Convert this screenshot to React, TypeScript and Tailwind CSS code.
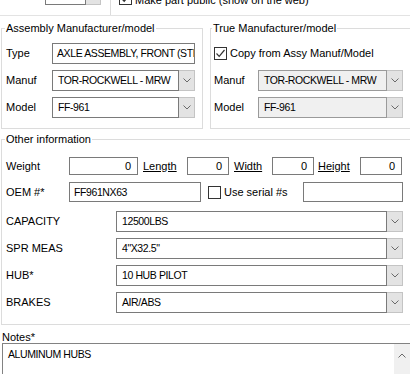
import React from "react";

// caps values in the original font are narrower than Arial
const valueText = "text-[10.5px] tracking-[-0.4px]";

function Chevron({ up = false }: { up?: boolean }) {
  return (
    <svg width="8" height="5" viewBox="0 0 8 5" className={up ? "rotate-180" : ""}>
      <path d="M0.5 0.5 L4 4 L7.5 0.5" fill="none" stroke="#6a6a6a" strokeWidth="1" />
    </svg>
  );
}

function Check({ checked = false }: { checked?: boolean }) {
  return (
    <div className="w-[13px] h-[13px] border border-[#333333] bg-white flex items-center justify-center shrink-0">
      {checked && (
        <svg width="11" height="11" viewBox="0 0 11 11">
          <path d="M1.5 5.5 L4.2 8.3 L9.5 2" fill="none" stroke="#333333" strokeWidth="1.2" />
        </svg>
      )}
    </div>
  );
}

function TextBox({ value = "", w, h = "h-[21px]", right = false }: { value?: string; w: string; h?: string; right?: boolean }) {
  return (
    <div
      className={`${w} ${h} border border-[#7a7a7a] bg-white flex items-center overflow-hidden whitespace-nowrap shrink-0 ${
        right ? "justify-end pr-[6px]" : `pl-[4px] ${valueText}`
      }`}
    >
      {value}
    </div>
  );
}

function Combo({ value, w, disabled = false }: { value: string; w: string; disabled?: boolean }) {
  return (
    <div className={`${w} h-[21px] flex shrink-0`}>
      <div
        className={`flex-1 h-full border flex items-center pl-[5px] overflow-hidden whitespace-nowrap ${valueText} ${
          disabled ? "bg-[#f0f0f0] border-[#9a9a9a]" : "bg-white border-[#7a7a7a]"
        }`}
      >
        {value}
      </div>
      <div className="w-[16px] h-full bg-[#e3e3e3] border border-l-0 border-[#c4c4c4] flex items-center justify-center">
        <Chevron />
      </div>
    </div>
  );
}

function Row({ label, labelW, children, className = "" }: { label: string; labelW: string; children: React.ReactNode; className?: string }) {
  return (
    <div className={`flex items-center ${className}`}>
      <div className={`${labelW} shrink-0`}>{label}</div>
      {children}
    </div>
  );
}

export default function App() {
  return (
    <div className="w-[410px] h-[374px] overflow-hidden bg-white text-black text-[11px] leading-[13px] font-['Liberation_Sans',Arial,sans-serif]">
      {/* top strip, cut off by the window */}
      <div className="h-[16px] border-b border-[#e3e3e3] flex items-start">
        <div className="ml-[45px] -mt-[16px] w-[56px] h-[21px] flex">
          <div className="flex-1 border border-[#7a7a7a] bg-white" />
          <div className="w-[15px] bg-[#e3e3e3] border border-l-0 border-[#c4c4c4]" />
        </div>
        <div className="ml-[9px] w-px h-[15px] bg-[#dcdcdc]" />
        <div className="ml-[8px] -mt-[8px]">
          <Check checked />
        </div>
        <div className="ml-[3px] -mt-[6px] whitespace-nowrap">Make part public (show on the web)</div>
      </div>

      {/* manufacturer group boxes */}
      <div className="flex">
        <div className="mt-[12px] ml-[1px] w-[202px] h-[101px] border border-[#dcdcdc] shrink-0">
          <div className="-mt-[7px] ml-[3px] px-[1px] bg-white w-fit">Assembly Manufacturer/model</div>
          <div className="pl-[4px]">
            <Row label="Type" labelW="w-[46px]" className="mt-[8px]">
              <TextBox value="AXLE ASSEMBLY, FRONT (STEER)" w="w-[143px]" />
            </Row>
            <Row label="Manuf" labelW="w-[46px]" className="mt-[6px]">
              <Combo value="TOR-ROCKWELL - MRW" w="w-[143px]" />
            </Row>
            <Row label="Model" labelW="w-[46px]" className="mt-[6px]">
              <Combo value="FF-961" w="w-[143px]" />
            </Row>
          </div>
        </div>
        <div className="mt-[12px] ml-[7px] w-[202px] h-[101px] border border-[#dcdcdc] shrink-0">
          <div className="-mt-[7px] ml-[1px] px-[1px] bg-white w-fit">True Manufacturer/model</div>
          <div className="pl-[3px]">
            <div className="mt-[12px] flex items-center">
              <Check checked />
              <div className="ml-[3px] whitespace-nowrap">Copy from Assy Manuf/Model</div>
            </div>
            <Row label="Manuf" labelW="w-[44px]" className="mt-[10px]">
              <Combo value="TOR-ROCKWELL - MRW" w="w-[145px]" disabled />
            </Row>
            <Row label="Model" labelW="w-[44px]" className="mt-[6px]">
              <Combo value="FF-961" w="w-[145px]" disabled />
            </Row>
          </div>
        </div>
      </div>

      {/* other information */}
      <div className="mt-[10px] ml-[1px] w-[410px] h-[186px] border border-[#dcdcdc]">
        <div className="-mt-[7px] ml-[3px] px-[1px] bg-white w-fit">Other information</div>
        <div className="pl-[4px]">
          <Row label="Weight" labelW="w-[63px]" className="mt-[11px]">
            <TextBox value="0" w="w-[69px]" h="h-[18px]" right />
            <div className="ml-[5px] w-[44px] underline">Length</div>
            <TextBox value="0" w="w-[42px]" h="h-[18px]" right />
            <div className="ml-[5px] w-[38px] underline">Width</div>
            <TextBox value="0" w="w-[42px]" h="h-[18px]" right />
            <div className="ml-[4px] w-[42px] underline">Height</div>
            <TextBox value="0" w="w-[42px]" h="h-[18px]" right />
          </Row>
          <Row label="OEM #*" labelW="w-[63px]" className="mt-[7px]">
            <TextBox value="FF961NX63" w="w-[132px]" h="h-[20px]" />
            <div className="ml-[7px]">
              <Check />
            </div>
            <div className="ml-[3px] w-[79px] whitespace-nowrap">Use serial #s</div>
            <TextBox w="w-[100px]" h="h-[20px]" />
          </Row>
          <Row label="CAPACITY" labelW="w-[110px]" className="mt-[9px]">
            <Combo value="12500LBS" w="w-[287px]" />
          </Row>
          <Row label="SPR MEAS" labelW="w-[110px]" className="mt-[6px]">
            <Combo value={'4"X32.5"'} w="w-[287px]" />
          </Row>
          <Row label="HUB*" labelW="w-[110px]" className="mt-[6px]">
            <Combo value="10 HUB PILOT" w="w-[287px]" />
          </Row>
          <Row label="BRAKES" labelW="w-[110px]" className="mt-[6px]">
            <Combo value="AIR/ABS" w="w-[287px]" />
          </Row>
        </div>
      </div>

      {/* notes */}
      <div className="mt-[6px] ml-[2px] leading-[12px]">Notes*</div>
      <div className="ml-[2px] w-[410px] h-[40px] border border-[#828282] flex">
        <div className={`flex-1 pl-[5px] pt-[4px] ${valueText}`}>ALUMINUM HUBS</div>
        <div className="mr-[1px] w-[16px] bg-[#f0f0f0] flex justify-center pt-[9px]">
          <Chevron up />
        </div>
      </div>
    </div>
  );
}
